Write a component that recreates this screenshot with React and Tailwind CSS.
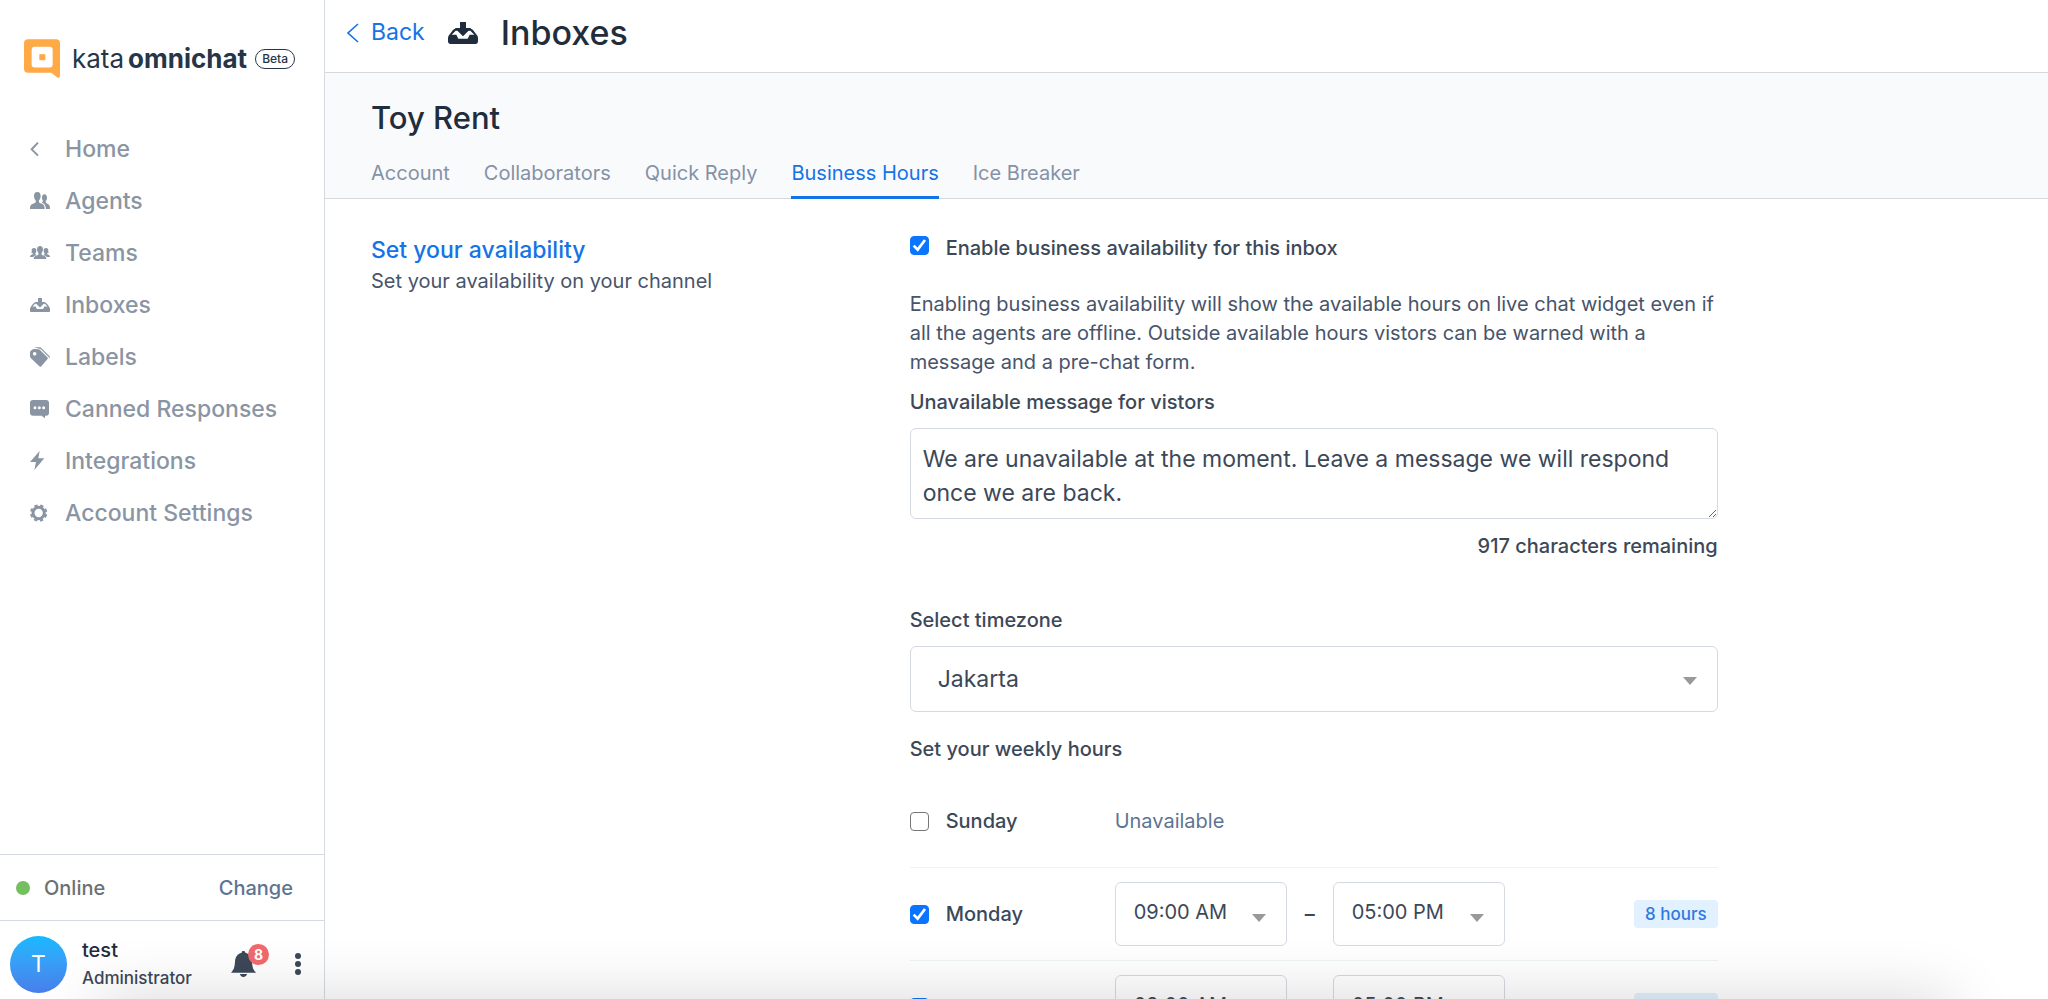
import React from "react";

const InboxIcon = ({ className }) => (
  <svg viewBox="0 0 90 66" className={className} fill="currentColor" aria-hidden="true">
    <path d="M36 0h18v18h16L45 43 20 18h16z" />
    <path fillRule="evenodd" d="M19 21h7l5 5h-8L11 38h14l6 12h28l6-12h14L67 26h-8l5-5h7q4 2 8 8l8 11q3 4 3 8v9q0 9-8 9H8q-8 0-8-9v-9q0-4 3-8l8-11q4-6 8-8z" />
  </svg>
);

const icons = {
  home: (
    <svg viewBox="0 0 60 60" className="h-5 w-5" fill="none" stroke="currentColor" strokeWidth="6" aria-hidden="true">
      <path d="M24 11 5 31l19 19" />
    </svg>
  ),
  agents: (
    <svg viewBox="0 0 60 52" className="w-5" fill="currentColor" aria-hidden="true">
      <path d="M22 0c-7 0-10 5-10 12 0 5 2 10 5 13 1 5 0 7-4 9C5 37 0 38 0 51h44c0-13-5-14-13-17-4-2-5-4-4-9 3-3 5-8 5-13C32 5 29 0 22 0z" />
      <path d="M43 7c5 0 8 4 8 10 0 4-1 8-4 10 0 5 1 6 5 8 6 3 8 5 8 16H48c-1-11-4-15-11-18-2-2 1-4 2-6-2-3-3-6-3-10 0-6 2-10 7-10z" />
    </svg>
  ),
  teams: (
    <svg viewBox="0 0 60 40" className="w-5" fill="currentColor" aria-hidden="true">
      <path d="M30 0c-6 0-9 4-9 10 0 4 2 8 4 11 1 4 0 6-3 7-7 2-11 4-11 11h38c0-7-4-9-11-11-3-1-4-3-3-7 2-3 4-7 4-11 0-6-3-10-9-10z" />
      <path d="M12 6c5 0 7 3 7 8 0 4-1 6-3 8 0 3 1 4 4 5-5 2-8 3-10 6H0c0-5 3-6 8-8 2-1 1-2 1-3-3-1-5-1-5-1 2-4 1-5 1-8 0-5 3-7 7-7z" />
      <path d="M48 6c-5 0-7 3-7 8 0 4 1 6 3 8 0 3-1 4-4 5 5 2 8 3 10 6h10c0-5-3-6-8-8-2-1-1-2-1-3 3-1 5-1 5-1-2-4-1-5-1-8 0-5-3-7-7-7z" />
    </svg>
  ),
  inboxes: <InboxIcon className="w-5" />,
  labels: (
    <svg viewBox="0 0 60 60" className="w-5" fill="currentColor" aria-hidden="true">
      <path fillRule="evenodd" d="M4 10q4-4 10-4l11 1q3 0 5 2l22 22q3 3 0 6L34 58q-3 3-6 0L3 34q-3-3-3-6V17q0-4 4-7zm10 5a5.500 5.500 0 1 0 0 11 5.500 5.500 0 0 0 0-11z" />
      <path d="M12 1h17q3 0 5 2l24 24q3 3 1 6L33 7q-2-2-5-2z" />
    </svg>
  ),
  canned: (
    <svg viewBox="0 0 60 56" className="w-5" fill="currentColor" aria-hidden="true">
      <path fillRule="evenodd" d="M9 0h39q9 0 9 9v29q0 9-9 9h-3v8l-10-8H9q-9 0-9-9V9q0-9 9-9zm6 19a4.500 4.500 0 1 0 0 9 4.500 4.500 0 0 0 0-9zm13 0a4.500 4.500 0 1 0 0 9 4.500 4.500 0 0 0 0-9zm13 0a4.500 4.500 0 1 0 0 9 4.500 4.500 0 0 0 0-9z" />
    </svg>
  ),
  integrations: (
    <svg viewBox="0 0 60 58" className="w-5" fill="currentColor" aria-hidden="true">
      <path d="M29 0 0 33h18l-5 24 30-35H25z" />
    </svg>
  ),
  settings: (
    <svg viewBox="0 0 60 54" className="w-5" fill="none" stroke="currentColor" aria-hidden="true">
      <circle cx="26" cy="27" r="17" strokeWidth="9" />
      <circle cx="26" cy="27" r="23" strokeWidth="6" strokeDasharray="10 8.064" strokeDashoffset="-4" />
    </svg>
  ),
};

const nav = [
  ["Home", "home"],
  ["Agents", "agents"],
  ["Teams", "teams"],
  ["Inboxes", "inboxes"],
  ["Labels", "labels"],
  ["Canned Responses", "canned"],
  ["Integrations", "integrations"],
  ["Account Settings", "settings"],
];

const tabs = ["Account", "Collaborators", "Quick Reply", "Business Hours", "Ice Breaker"];

const Caret = ({ className }) => (
  <svg viewBox="0 0 14 8" className={"pointer-events-none absolute h-2 w-3.5 " + className} fill="#999999" aria-hidden="true">
    <path d="M0 0h14L7 8z" />
  </svg>
);

function Checkbox({ id, checked }) {
  return (
    <span className="grid size-[19px] shrink-0">
      <input
        id={id}
        type="checkbox"
        defaultChecked={checked}
        className="peer col-start-1 row-start-1 size-[19px] appearance-none rounded-[4px] border border-[#767676] bg-white checked:border-[#0b75ff] checked:bg-[#0b75ff]"
      />
      <svg viewBox="0 0 57 57" className="pointer-events-none invisible col-start-1 row-start-1 size-[19px] peer-checked:visible" fill="none" stroke="white" strokeWidth="8" aria-hidden="true">
        <path d="M11 29l12 12 22-29" />
      </svg>
    </span>
  );
}

function Sidebar() {
  return (
    <aside className="flex w-[325px] shrink-0 flex-col border-r border-[#d5dae1] bg-white">
      <a href="#home" className="flex items-center px-6 pt-[39px]" aria-label="kata omnichat Beta">
        <svg viewBox="0 0 108 116" className="h-[39px] w-9" aria-hidden="true">
          <path fill="#ffaa45" fillRule="evenodd" d="M12 0h84q12 0 12 12v98q0 8-8 5L82 101H12Q0 101 0 89V12Q0 0 12 0zm20 23q-9 0-9 9v44q0 9 9 9h45q9 0 9-9V32q0-9-9-9z" />
          <path fill="#ffaa45" d="M46 45h18v18H46z" />
        </svg>
        <span className="ml-3 flex gap-1 text-[26px] leading-[39px] text-[#263548]">
          <span>kata</span>
          <b className="font-bold">omnichat</b>
        </span>
        <span className="ml-2 rounded-full border border-[#263548] px-1.5 text-xs leading-[18px] font-medium text-[#263548]">Beta</span>
      </a>
      <nav className="mt-[45px] flex flex-col pl-[30px]">
        {nav.map(([label, icon]) => (
          <a key={label} href={"#" + icon} className="flex h-[52px] items-center text-[23px] font-medium text-[#8a95a3]">
            <span className="w-[35px]">{icons[icon]}</span>
            {label}
          </a>
        ))}
      </nav>
      <div className="mt-auto flex h-[66px] items-center border-t border-[#d5dae1] pr-[31px] pl-4 text-xl">
        <span className="size-3.5 rounded-full bg-[#76bf61]" />
        <span className="ml-[14px] font-medium text-[#6e6f73]">Online</span>
        <button type="button" className="ml-auto font-medium text-[#5d7592]">Change</button>
      </div>
      <div className="flex h-[79px] items-center border-t border-[#d5dae1] pt-2 pr-4 pl-2.5">
        <span className="flex size-[57px] items-center justify-center rounded-full bg-linear-to-b from-[#14b9ff] to-[#477eeb] text-[23px] text-white">T</span>
        <div className="ml-[15px] font-medium">
          <div className="text-xl leading-7 text-[#1f2d3d]">test</div>
          <div className="text-[17px] leading-7 text-[#3c4858]">Administrator</div>
        </div>
        <button type="button" aria-label="Notifications" className="relative ml-auto text-[#3c4858]">
          <svg viewBox="0 0 75 78" className="h-[26px] w-[25px]" fill="currentColor" aria-hidden="true">
            <path d="M37 0c4 0 6 2 6 5 13 3 19 13 20 27 1 18 4 24 12 33H0c8-9 11-15 12-33C13 18 19 8 32 5c0-3 1-5 5-5z" />
            <path d="M27 69h21c-1 5-5 9-11 9s-9-4-10-9z" />
          </svg>
          <span className="absolute -top-[7px] left-[17px] flex size-[21px] items-center justify-center rounded-full bg-[#f06a6c] text-sm font-bold text-white">8</span>
        </button>
        <button type="button" aria-label="More options" className="ml-8 text-[#3c4858]">
          <svg viewBox="0 0 20 24" className="h-6 w-5" fill="currentColor" aria-hidden="true">
            <circle cx="10" cy="4" r="3" />
            <circle cx="10" cy="12" r="3" />
            <circle cx="10" cy="20" r="3" />
          </svg>
        </button>
      </div>
    </aside>
  );
}

function TimeSelect({ label, value }) {
  return (
    <div className="relative">
      <select aria-label={label} defaultValue={value} className="block h-16 w-[172px] appearance-none rounded-md border border-[#d5dae1] bg-transparent pr-10 pb-1 pl-[18px] text-xl text-[#3c4858]">
        <option>{value}</option>
      </select>
      <Caret className="right-[21px] bottom-6" />
    </div>
  );
}

function DayRow({ day, open }) {
  const id = "day-" + day;
  return (
    <div className="flex h-[93px] items-center border-b border-[#eef3f6]">
      <Checkbox id={id} checked={open} />
      <label htmlFor={id} className="ml-[17px] w-[169px] text-xl font-medium text-[#3c4858]">{day}</label>
      {open ? (
        <>
          <TimeSelect label={day + " opening time"} value="09:00 AM" />
          <span className="w-[46px] text-center text-xl font-medium text-[#3c4858]">–</span>
          <TimeSelect label={day + " closing time"} value="05:00 PM" />
          <span className="ml-auto rounded bg-[#e1f1ff] px-[11px] text-[17px] leading-7 font-medium text-[#2f79e3]">8 hours</span>
        </>
      ) : (
        <span className="text-xl text-[#5d7592]">Unavailable</span>
      )}
    </div>
  );
}

export default function App() {
  return (
    <div className="relative flex h-screen overflow-hidden bg-white font-[Inter,sans-serif]">
      <Sidebar />
      <main className="flex min-w-0 flex-1 flex-col">
        <header className="flex h-[73px] shrink-0 items-center border-b border-[#d5dae1] pb-[7px] pl-[22px]">
          <a href="#back" className="flex items-center text-[23px] text-[#1473e6]">
            <svg viewBox="0 0 12 20" className="mr-3 h-5 w-3" fill="none" stroke="currentColor" strokeWidth="1.600" aria-hidden="true">
              <path d="M11 1 1 10l10 9" />
            </svg>
            Back
          </a>
          <InboxIcon className="mx-[23px] w-[30px] text-[#1f2d3d]" />
          <h1 className="text-[34px] font-medium text-[#1f2d3d]">Inboxes</h1>
        </header>
        <section className="flex h-[126px] shrink-0 flex-col border-b border-[#d5dae1] bg-[#f9fafc] pl-[46px]">
          <h2 className="mt-[23px] text-[31px] leading-[44px] font-medium text-[#1f2d3d]">Toy Rent</h2>
          <nav className="mt-auto -mb-px flex gap-[34px] text-xl leading-7">
            {tabs.map((tab) => (
              <a
                key={tab}
                href={"#" + tab.toLowerCase().replace(" ", "-")}
                className={
                  tab === "Business Hours"
                    ? "border-b-3 border-[#1473e6] pb-[9px] text-[#1473e6]"
                    : "border-b-3 border-transparent pb-[9px] text-[#8492a6]"
                }
              >
                {tab}
              </a>
            ))}
          </nav>
        </section>
        <div className="flex min-h-0 flex-1 overflow-hidden pt-[33px] pr-[61px] pl-[46px]">
          <div className="w-1/3 shrink-0 pt-0.5">
            <h3 className="text-[23px] leading-8 font-medium text-[#1473e6]">Set your availability</h3>
            <p className="text-xl leading-[30px] text-[#47546a]">Set your availability on your channel</p>
          </div>
          <form className="w-1/2 shrink-0 text-xl leading-[29px] text-[#3c4858]">
            <div className="flex items-start pt-1">
              <Checkbox id="enable" checked />
              <label htmlFor="enable" className="ml-[17px] leading-7 -mt-0.5 font-medium">Enable business availability for this inbox</label>
            </div>
            <p className="mt-7 text-[#47546a]">
              Enabling business availability will show the available hours on live chat widget even if all the agents are offline. Outside available hours vistors can be warned with a message and a pre-chat form.
            </p>
            <label htmlFor="message" className="mt-[11px] block font-medium">Unavailable message for vistors</label>
            <textarea
              id="message"
              defaultValue="We are unavailable at the moment. Leave a message we will respond once we are back."
              className="mt-[11px] block h-[91px] w-full overflow-hidden rounded-md border border-[#d5dae1] px-3 py-[13px] text-[23px] leading-[34px]"
            />
            <div className="mt-[13px] text-right font-medium">917 characters remaining</div>
            <label htmlFor="timezone" className="mt-[45px] block font-medium">Select timezone</label>
            <div className="relative mt-[11px]">
              <select id="timezone" defaultValue="Jakarta" className="block h-[66px] w-full appearance-none rounded-md border border-[#d5dae1] bg-transparent px-[27px] text-[23px]">
                <option>Jakarta</option>
              </select>
              <Caret className="top-[31px] right-[21px]" />
            </div>
            <h4 className="mt-[23px] font-medium">Set your weekly hours</h4>
            <div className="mt-[11px]">
              <DayRow day="Sunday" />
              <DayRow day="Monday" open />
              <DayRow day="Tuesday" open />
            </div>
          </form>
        </div>
      </main>
      <div className="pointer-events-none absolute top-full right-24 left-24 h-20 shadow-[0_0_64px_rgba(0,0,0,0.16)]" />
    </div>
  );
}
